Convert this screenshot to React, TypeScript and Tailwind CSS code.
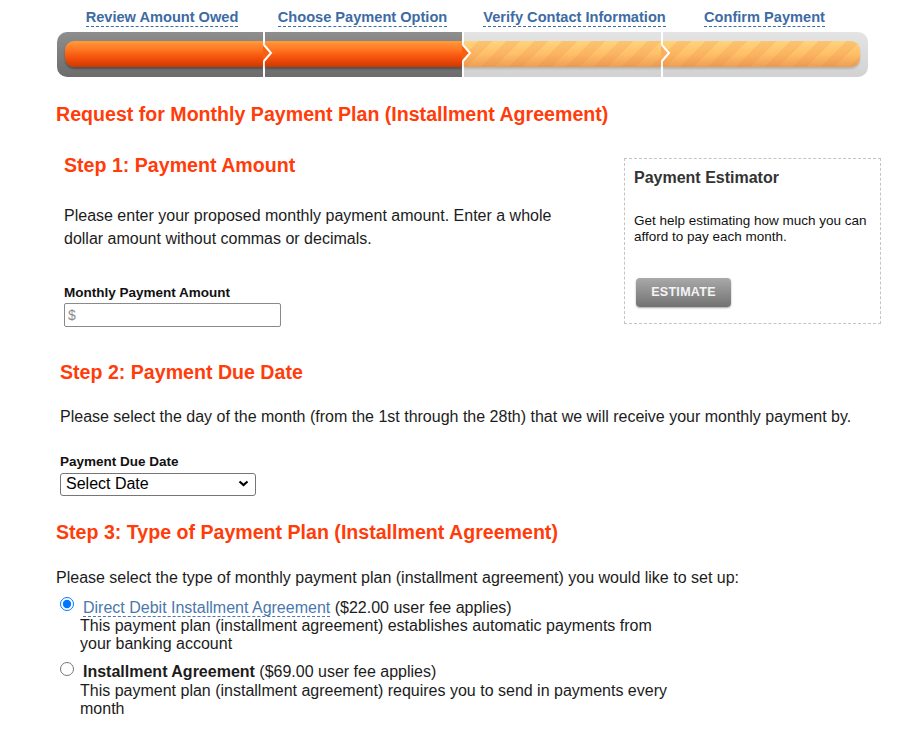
import { ReactNode } from 'react';

// Payment plan request form — step 2 of the checkout wizard.

const steps = [
  { label: 'Review Amount Owed', w: 'w-[206px]', pad: 'pl-[4px]' },
  { label: 'Choose Payment Option', w: 'w-[199px]', pad: '' },
  { label: 'Verify Contact Information', w: 'w-[199px]', pad: 'pl-[26px]' },
  { label: 'Confirm Payment', w: 'w-[207px]', pad: '' },
];

const DONE_BAR =
  'bg-[linear-gradient(to_bottom,#ff9c3c_0%,#ff7420_35%,#f4500c_65%,#cf3800_100%)]';
const TODO_BAR =
  'bg-[image:repeating-linear-gradient(135deg,rgba(255,255,255,0)_0px,rgba(255,255,255,0)_10px,rgba(232,128,64,0.18)_10px,rgba(232,128,64,0.18)_20px),linear-gradient(to_bottom,#ffd47c_0%,#ffbf68_50%,#ee9e54_100%)]';

function Chevron({ fill }: { fill: string }) {
  return (
    <svg
      width="12"
      height="45"
      viewBox="0 0 12 45"
      className="absolute left-[-2px] top-0"
    >
      <polygon points="0,13 9,21 0,29" fill={fill} />
      <polyline
        points="1,13 8,21 1,29"
        fill="none"
        stroke="#fff"
        strokeWidth="2"
      />
    </svg>
  );
}

function ProgressBar() {
  return (
    <div className="ml-[57px]">
      <div className="flex h-[23px]">
        {steps.map((s) => (
          <div key={s.label} className={`${s.w} ${s.pad} flex justify-center`}>
            <span className="h-[18px] whitespace-nowrap border-b border-dashed border-[#3d6ba3] text-[14.6px] font-bold leading-[17px] text-[#3d6ba3]">
              {s.label}
            </span>
          </div>
        ))}
      </div>
      <div className="flex h-[45px]">
        <div className="w-[206px] rounded-l-[10px] bg-[linear-gradient(to_bottom,#8e8e8e,#6c6c6c)] pl-[8px] pt-[9px] pb-[10px]">
          <div className={`h-full rounded-l-[9px] ${DONE_BAR} shadow-[0_2px_2px_rgba(0,0,0,0.3)]`} />
        </div>
        <div className="relative w-[199px] border-l-2 border-white bg-[linear-gradient(to_bottom,#8e8e8e,#6c6c6c)] pt-[9px] pb-[10px]">
          <div className={`h-full ${DONE_BAR} shadow-[0_2px_2px_rgba(0,0,0,0.3)]`} />
          <Chevron fill="#f6600f" />
        </div>
        <div className="relative w-[199px] border-l-2 border-white bg-[linear-gradient(to_bottom,#e4e4e4,#d2d2d2)] pt-[9px] pb-[10px]">
          <div className={`h-full ${TODO_BAR} shadow-[0_2px_2px_rgba(0,0,0,0.15)]`} />
          <Chevron fill="#f6600f" />
        </div>
        <div className="relative w-[207px] rounded-r-[10px] border-l-2 border-white bg-[linear-gradient(to_bottom,#e4e4e4,#d2d2d2)] pr-[8px] pt-[9px] pb-[10px]">
          <div className={`h-full rounded-r-[9px] ${TODO_BAR} shadow-[0_2px_2px_rgba(0,0,0,0.15)]`} />
          <Chevron fill="#f8b060" />
        </div>
      </div>
    </div>
  );
}

function StepHeading({ children }: { children: ReactNode }) {
  return (
    <h2 className="text-[19.6px] font-bold leading-[22px] text-[#ff3c0a]">
      {children}
    </h2>
  );
}

function FieldLabel({ children }: { children: ReactNode }) {
  return (
    <div className="text-[13.5px] font-bold leading-[15px] text-[#111]">
      {children}
    </div>
  );
}

function Estimator() {
  return (
    <aside className="mt-[4px] ml-auto mr-[23px] h-[166px] w-[257px] border border-dashed border-[#c4c4c4] pl-[9px] pt-[10px]">
      <h3 className="text-[16px] font-bold leading-[18px] text-[#333]">
        Payment Estimator
      </h3>
      <p className="mt-[26px] text-[13.5px] leading-[16px] text-[#111]">
        Get help estimating how much you can afford to pay each month.
      </p>
      <button
        type="button"
        className="mt-[33px] ml-[2px] h-[29px] w-[95px] rounded-[4px] bg-[linear-gradient(to_bottom,#a9a9a9,#727272)] text-[12.5px] font-bold tracking-[0.3px] text-[#f4f4f4] shadow-[0_1px_2px_rgba(0,0,0,0.35)]"
      >
        ESTIMATE
      </button>
    </aside>
  );
}

export default function App() {
  return (
    <div className="w-[904px] min-h-[730px] bg-white pt-[9px] font-['Liberation_Sans',Arial,sans-serif] text-[#1c1c1c]">
      <ProgressBar />

      <main className="pl-[56px]">
        <h1 className="mt-[26px] text-[19.6px] font-bold leading-[22px] text-[#ff3c0a]">
          Request for Monthly Payment Plan (Installment Agreement)
        </h1>

        {/* Step 1 */}
        <div className="mt-[29px] flex">
          <section className="pl-[8px]">
            <StepHeading>Step 1: Payment Amount</StepHeading>
            <p className="mt-[28px] w-[500px] text-[16px] leading-[23px]">
              Please enter your proposed monthly payment amount. Enter a whole
              dollar amount without commas or decimals.
            </p>
            <div className="mt-[35px]">
              <FieldLabel>Monthly Payment Amount</FieldLabel>
            </div>
            <input
              type="text"
              placeholder="$"
              className="mt-[3px] h-[24px] w-[217px] rounded-[2px] border border-[#8a8a8a] px-[3px] text-[14px] placeholder:text-[#8a8a8a]"
            />
          </section>
          <Estimator />
        </div>

        {/* Step 2 */}
        <section className="mt-[34px] pl-[4px]">
          <StepHeading>Step 2: Payment Due Date</StepHeading>
          <p className="mt-[22px] text-[16px] leading-[23px]">
            Please select the day of the month (from the 1st through the 28th)
            that we will receive your monthly payment by.
          </p>
          <div className="mt-[26px]">
            <FieldLabel>Payment Due Date</FieldLabel>
          </div>
          <div className="relative mt-[3px] w-[196px]">
            <select
              defaultValue=""
              className="h-[23px] w-[196px] appearance-none rounded-[3px] border border-[#767676] bg-white pl-[5px] text-[16px] leading-[20px] text-black"
            >
              <option value="">Select Date</option>
              {Array.from({ length: 28 }, (_, i) => (
                <option key={i} value={String(i + 1)}>
                  {i + 1}
                </option>
              ))}
            </select>
            <svg
              width="11"
              height="7"
              viewBox="0 0 11 7"
              className="pointer-events-none absolute right-[7px] top-[8px]"
            >
              <polyline
                points="1.5,1.5 5.5,5 9.5,1.5"
                fill="none"
                stroke="#000"
                strokeWidth="2.2"
              />
            </svg>
          </div>
        </section>

        {/* Step 3 */}
        <section className="mt-[25px]">
          <StepHeading>Step 3: Type of Payment Plan (Installment Agreement)</StepHeading>
          <p className="mt-[23px] text-[16px] leading-[23px]">
            Please select the type of monthly payment plan (installment
            agreement) you would like to set up:
          </p>

          <div className="mt-[10px] text-[16px] leading-[18px]">
            <label className="flex items-start">
              <input
                type="radio"
                name="plan"
                defaultChecked
                className="ml-[4px] -mt-[2px] h-[14px] w-[14px]"
              />
              <span className="ml-[9px]">
                <span className="border-b border-dashed border-[#4a78ad] text-[#4a78ad]">
                  Direct Debit Installment Agreement
                </span>{' '}
                ($22.00 user fee applies)
              </span>
            </label>
            <p className="w-[600px] pl-[24px]">
              This payment plan (installment agreement) establishes automatic
              payments from your banking account
            </p>
          </div>

          <div className="mt-[10px] text-[16px] leading-[18.5px]">
            <label className="flex items-start">
              <input
                type="radio"
                name="plan"
                className="ml-[4px] -mt-[1px] h-[14px] w-[14px]"
              />
              <span className="ml-[9px]">
                <span className="font-bold">Installment Agreement</span> ($69.00
                user fee applies)
              </span>
            </label>
            <p className="w-[630px] pl-[24px]">
              This payment plan (installment agreement) requires you to send in
              payments every month
            </p>
          </div>
        </section>
      </main>
    </div>
  );
}
